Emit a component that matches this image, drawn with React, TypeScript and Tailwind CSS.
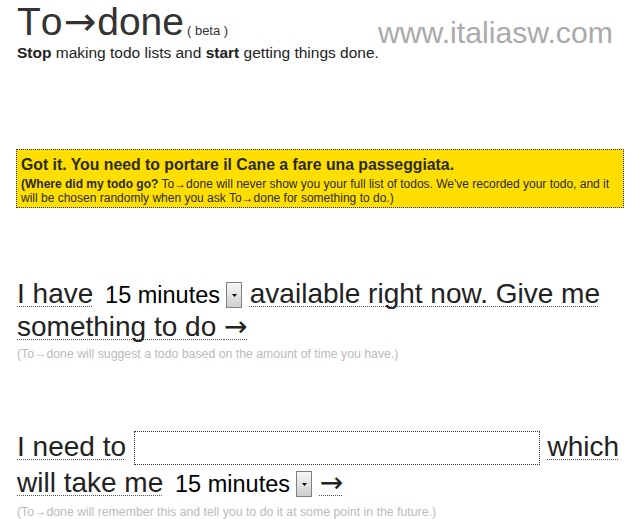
import React from "react";

const U =
  "underline decoration-dotted decoration-[#555] decoration-1 underline-offset-[3px] [text-decoration-skip-ink:none]";

function Arrow({ cls = "" }: { cls?: string }) {
  return <span className={"[font-family:'DejaVu_Sans',sans-serif] " + cls}>→</span>;
}

function Sel() {
  return (
    <span className="inline-flex items-center pl-[4px] no-underline">
      <span className="text-[23.5px] leading-[26px] text-black">15 minutes</span>
      <span className="ml-[6px] inline-flex h-[26px] w-[16px] items-center justify-center border border-[#7f7f7f] bg-gradient-to-b from-[#f6f6f6] to-[#cfcfcf]">
        <svg width="5" height="3" viewBox="0 0 5 3">
          <path d="M0 0h5L2.5 3z" fill="#000" />
        </svg>
      </span>
    </span>
  );
}

export default function App() {
  return (
    <div className="relative min-h-[519px] w-[637px] overflow-hidden bg-white text-[#222] [font-family:'Liberation_Sans',Arial,sans-serif]">
      <div className="absolute left-[378px] top-[16px] text-[30.2px] leading-[34px] text-[#aaa]">
        www.italiasw.com
      </div>

      <div className="flex items-baseline pl-[17px]">
        <span className="text-[39px] leading-[44px] text-[#333] [font-kerning:none]">
          To<Arrow cls="mx-[1px]" />done
        </span>
        <span className="ml-[3px] text-[13px] text-[#333]">( beta )</span>
      </div>
      <div className="pl-[17px] text-[15.5px] leading-[18px] text-[#222]">
        <b>Stop</b> making todo lists and <b>start</b> getting things done.
      </div>

      <div className="ml-[16px] mt-[87px] w-[608px] border border-dotted border-[#333] bg-[#ffde00] px-[4px] pb-[2px] pt-[7px] text-[#2b2b20]">
        <div className="mb-[4px] whitespace-nowrap text-[15.8px] font-bold leading-[16px]">
          Got it. You need to portare il Cane a fare una passeggiata.
        </div>
        <div className="whitespace-nowrap text-[12px] leading-[14px]">
          <div>
            <b>(Where did my todo go?</b> To→done will never show you your full list of todos. We've recorded your todo, and it
          </div>
          <div>will be chosen randomly when you ask To→done for something to do.)</div>
        </div>
      </div>

      <div className="mt-[69px] pl-[17px] text-[28px] leading-[33px] text-[#222]">
        <span className={U}>I have</span> <Sel />{" "}
        <span className={U}>available right now. Give me</span>
        <br />
        <span className={U}>
          something to do <Arrow />
        </span>
      </div>
      <div className="mt-[4px] pl-[17px] text-[12.3px] leading-[14px] text-[#bbb]">
        (To→done will suggest a todo based on the amount of time you have.)
      </div>

      <div className="mt-[68px] pl-[17px] text-[28px] leading-[35px] text-[#222]">
        <span className={U}>I need to</span>{" "}
        <span className="inline-block h-[34px] w-[406px] border border-dotted border-[#333] bg-white align-[-9px]" />{" "}
        <span className={U}>which</span>
        <br />
        <span className={U}>will take me</span> <Sel />{" "}
        <span className={U}>
          <Arrow />
        </span>
      </div>
      <div className="mt-[5px] pl-[17px] text-[12.3px] leading-[14px] text-[#bbb]">
        (To→done will remember this and tell you to do it at some point in the future.)
      </div>
    </div>
  );
}
